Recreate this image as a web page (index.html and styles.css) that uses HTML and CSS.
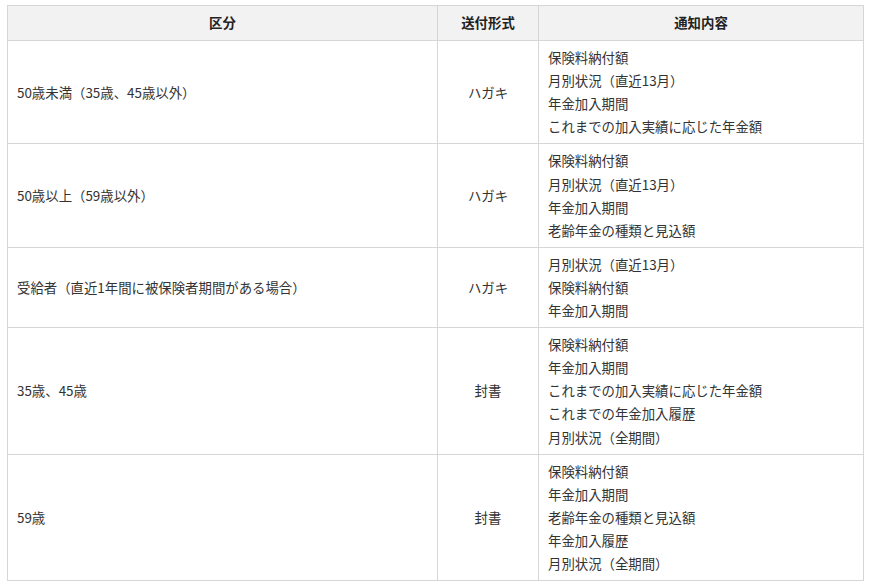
FILE: index.html
```html
<!DOCTYPE html>
<html lang="ja">
<head>
<meta charset="utf-8">
<link rel="stylesheet" href="styles.css">
</head>
<body>
<table class="tbl">
  <colgroup>
    <col class="c1">
    <col class="c2">
    <col class="c3">
  </colgroup>
  <thead>
    <tr><th>区分</th><th>送付形式</th><th>通知内容</th></tr>
  </thead>
  <tbody>
    <tr>
      <td>50歳未満（35歳、45歳以外）</td>
      <td class="ctr">ハガキ</td>
      <td>保険料納付額<br>月別状況（直近13月）<br>年金加入期間<br>これまでの加入実績に応じた年金額</td>
    </tr>
    <tr>
      <td>50歳以上（59歳以外）</td>
      <td class="ctr">ハガキ</td>
      <td>保険料納付額<br>月別状況（直近13月）<br>年金加入期間<br>老齢年金の種類と見込額</td>
    </tr>
    <tr>
      <td>受給者（直近1年間に被保険者期間がある場合）</td>
      <td class="ctr">ハガキ</td>
      <td>月別状況（直近13月）<br>保険料納付額<br>年金加入期間</td>
    </tr>
    <tr>
      <td>35歳、45歳</td>
      <td class="ctr">封書</td>
      <td>保険料納付額<br>年金加入期間<br>これまでの加入実績に応じた年金額<br>これまでの年金加入履歴<br>月別状況（全期間）</td>
    </tr>
    <tr>
      <td>59歳</td>
      <td class="ctr">封書</td>
      <td>保険料納付額<br>年金加入期間<br>老齢年金の種類と見込額<br>年金加入履歴<br>月別状況（全期間）</td>
    </tr>
  </tbody>
</table>
</body>
</html>
```
FILE: styles.css
```css
html, body {
  margin: 0;
  background: #fff;
}
body {
  padding: 5px 8px 0 7px;
  font-family: "Noto Sans CJK JP", "Noto Sans", sans-serif;
  font-size: 13.4px;
  color: #333;
}
.tbl {
  border-collapse: collapse;
  width: 856px;
  table-layout: fixed;
}
.c1 { width: 430px; }
.c2 { width: 101px; }
.c3 { width: 325px; }
.tbl th, .tbl td {
  border: 1px solid #d6d6d6;
  line-height: 23.1px;
  padding: 5px 9px;
  vertical-align: middle;
  text-align: left;
}
.tbl th {
  background: #f2f2f2;
  font-weight: bold;
  text-align: center;
  padding: 5px 9px 6px;
  color: #222;
}
.tbl td.ctr {
  text-align: center;
}
```
